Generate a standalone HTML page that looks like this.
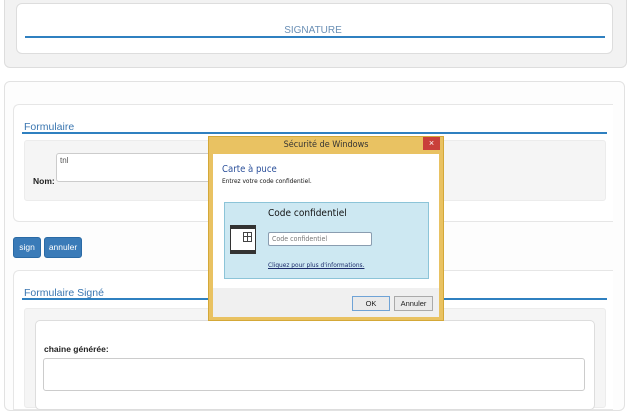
<!DOCTYPE html>
<html><head><meta charset="utf-8"><style>
*{box-sizing:border-box;margin:0;padding:0}
body{width:640px;height:400px;overflow:hidden;background:#fff;position:relative;font-family:"Liberation Sans",sans-serif;font-size:9px;color:#333}
.a{position:absolute}
.seg{font-family:"DejaVu Sans Condensed","Liberation Sans",sans-serif}
</style></head><body>
<!-- top panel -->
<div class="a" style="left:4px;top:-6px;width:623px;height:74px;background:#f2f2f2;border:1px solid #ddd;border-radius:6px"></div>
<div class="a" style="left:16px;top:3px;width:597px;height:51px;background:#fff;border:1px solid #ddd;border-radius:6px"></div>
<div class="a" style="left:0;top:25px;width:626px;text-align:center;color:#6a8fb5;font-size:10px">SIGNATURE</div>
<div class="a" style="left:25px;top:36px;width:580px;height:2px;background:#2f80c0"></div>
<!-- second panel -->
<div class="a" style="left:4px;top:81px;width:621px;height:330px;background:#fdfdfd;border:1px solid #e2e2e2;border-radius:6px"></div>
<div class="a" style="left:13px;top:104px;width:600px;height:118px;background:#fff;border:1px solid #e6e6e6;border-right:none;border-radius:6px 0 0 6px"></div>
<div class="a" style="left:24px;top:121px;color:#3a76b0;font-size:10.5px">Formulaire</div>
<div class="a" style="left:22px;top:132px;width:585px;height:2px;background:#2f80c0"></div>
<div class="a" style="left:24px;top:140px;width:582px;height:61px;background:#f5f5f5;border:1px solid #ececec;border-radius:3px"></div>
<div class="a" style="left:33px;top:176px;font-weight:bold;font-size:8.5px;color:#222">Nom:</div>
<div class="a" style="left:56px;top:153px;width:160px;height:29px;background:#fff;border:1px solid #ccc;border-radius:3px;padding:2px 3px;font-size:8px;color:#555">tnl</div>
<div class="a" style="left:13px;top:237px;width:28px;height:21px;background:#3a7bb8;border:1px solid #2a6aa5;border-radius:3px;color:#fff;font-size:8.5px;text-align:center;line-height:19px">sign</div>
<div class="a" style="left:44px;top:237px;width:38px;height:21px;background:#3a7bb8;border:1px solid #2a6aa5;border-radius:3px;color:#fff;font-size:8.5px;text-align:center;line-height:19px">annuler</div>
<!-- signed panel -->
<div class="a" style="left:13px;top:270px;width:600px;height:140px;background:#fff;border:1px solid #e6e6e6;border-right:none;border-radius:6px 0 0 0"></div>
<div class="a" style="left:24px;top:287px;color:#3a76b0;font-size:10.5px">Formulaire Signé</div>
<div class="a" style="left:22px;top:298px;width:585px;height:2px;background:#2f80c0"></div>
<div class="a" style="left:24px;top:308px;width:582px;height:100px;background:#f5f5f5;border:1px solid #ececec;border-radius:3px"></div>
<div class="a" style="left:35px;top:320px;width:560px;height:90px;background:#fff;border:1px solid #ddd;border-radius:5px"></div>
<div class="a" style="left:44px;top:344px;font-weight:bold;font-size:8.5px;color:#222">chaine générée:</div>
<div class="a" style="left:43px;top:358px;width:542px;height:33px;background:#fff;border:1px solid #ccc;border-radius:3px"></div>
<!-- dialog -->
<div class="a" style="left:208px;top:136px;width:236px;height:185px;background:#e9c262;border:1px solid #d4a838"></div>
<div class="a seg" style="left:208px;top:140px;width:236px;text-align:center;font-size:9px;color:#333">Sécurité de Windows</div>
<div class="a" style="left:423px;top:137px;width:17px;height:13px;background:#c9403a;color:#fff;font-size:9px;text-align:center;line-height:13px">×</div>
<div class="a" style="left:213px;top:154px;width:226px;height:134px;background:#fff"></div>
<div class="a" style="left:213px;top:288px;width:226px;height:29px;background:#f0f0f0"></div>
<div class="a seg" style="left:222px;top:164px;color:#2a4f9a;font-size:9.5px">Carte à puce</div>
<div class="a seg" style="left:222px;top:177px;color:#111;font-size:6.5px">Entrez votre code confidentiel.</div>
<div class="a" style="left:224px;top:202px;width:205px;height:77px;background:#cde8f2;border:1px solid #8cc4d8"></div>
<div class="a" style="left:230px;top:225px;width:26px;height:29px;background:#fff;border:1px solid #333;border-top:4px solid #333;border-bottom:4px solid #333"></div>
<div class="a" style="left:243px;top:232px;width:9px;height:10px;border:1px solid #444;background:linear-gradient(#444,#444) 3px 0/1px 100% no-repeat,linear-gradient(#444,#444) 0 3px/100% 1px no-repeat"></div>
<div class="a seg" style="left:268px;top:208px;color:#111;font-size:10px">Code confidentiel</div>
<div class="a seg" style="left:268px;top:232px;width:104px;height:14px;background:#fff;border:1px solid #8a9db0;border-radius:2px;font-size:7px;color:#777;padding:2px 3px">Code confidentiel</div>
<div class="a seg" style="left:268px;top:261px;color:#1a2a6a;font-size:6.5px;text-decoration:underline">Cliquez pour plus d'informations.</div>
<div class="a" style="left:352px;top:296px;width:38px;height:15px;background:#eaeaea;border:1px solid #6fa3d6;font-size:7.5px;text-align:center;line-height:13px;color:#222">OK</div>
<div class="a" style="left:394px;top:296px;width:39px;height:15px;background:#eaeaea;border:1px solid #aaa;font-size:7.5px;text-align:center;line-height:13px;color:#222">Annuler</div>
</body></html>
